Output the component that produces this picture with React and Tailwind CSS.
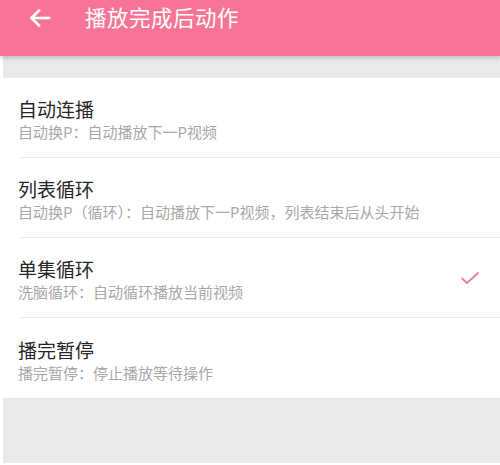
import React, { useState } from 'react';

const options = [
  { id: 'auto', title: '自动连播', desc: '自动换P：自动播放下一P视频' },
  { id: 'list', title: '列表循环', desc: '自动换P（循环）：自动播放下一P视频，列表结束后从头开始' },
  { id: 'single', title: '单集循环', desc: '洗脑循环：自动循环播放当前视频' },
  { id: 'pause', title: '播完暂停', desc: '播完暂停：停止播放等待操作' },
];

const BackArrow = () => (
  <svg width="24" height="24" viewBox="0 0 24 24" fill="none" stroke="white" strokeWidth="2.6" strokeLinecap="square">
    <path d="M21 12H4" />
    <path d="M11 4.5L3.5 12L11 19.5" />
  </svg>
);

const Check = () => (
  <svg width="20" height="16" viewBox="0 0 20 16" fill="none" stroke="#ea7aa0" strokeWidth="1.8" strokeLinecap="round" strokeLinejoin="round">
    <path d="M2 8.5L7 13L18 3" />
  </svg>
);

const App = () => {
  const [selected, setSelected] = useState('single');

  return (
    <div className="w-[500px] h-[465px] bg-white flex flex-col overflow-hidden" style={{ fontFamily: '"Noto Sans CJK SC", "Noto Sans", sans-serif' }}>
      <header className="h-[56px] bg-[#f87497] flex items-start pt-[4px] shadow-[0_2px_4px_rgba(0,0,0,0.18)] relative z-10">
        <button className="ml-[27px] mt-[1px] w-[26px] h-[26px] flex items-center justify-center">
          <BackArrow />
        </button>
        <h1 className="ml-[32px] text-[21.5px] leading-[26px] text-white tracking-[0.5px]">播放完成后动作</h1>
      </header>

      <div className="h-[22px] bg-[#e9e9e9] border-l-[3px] border-white" />

      <ul className="bg-white">
        {options.map((opt, i) => (
          <li
            key={opt.id}
            onClick={() => setSelected(opt.id)}
            className="pl-[18px] cursor-pointer"
          >
            <div className={`h-[80px] flex items-center pr-[18px] ${i < options.length - 1 ? 'border-b border-[#ececec]' : ''}`}>
              <div className="flex-1 pt-[3px]">
                <p className="text-[19px] leading-[25px] text-[#262626]">{opt.title}</p>
                <p className="text-[15px] leading-[20px] text-[#a8a8a8] mt-[1px]">{opt.desc}</p>
              </div>
              {selected === opt.id && (
                <span className="mr-[2px]">
                  <Check />
                </span>
              )}
            </div>
          </li>
        ))}
      </ul>

      <div className="flex-1 bg-[#e9e9e9] border-l-[3px] border-white mb-[2px]" />
    </div>
  );
};

export default App;
